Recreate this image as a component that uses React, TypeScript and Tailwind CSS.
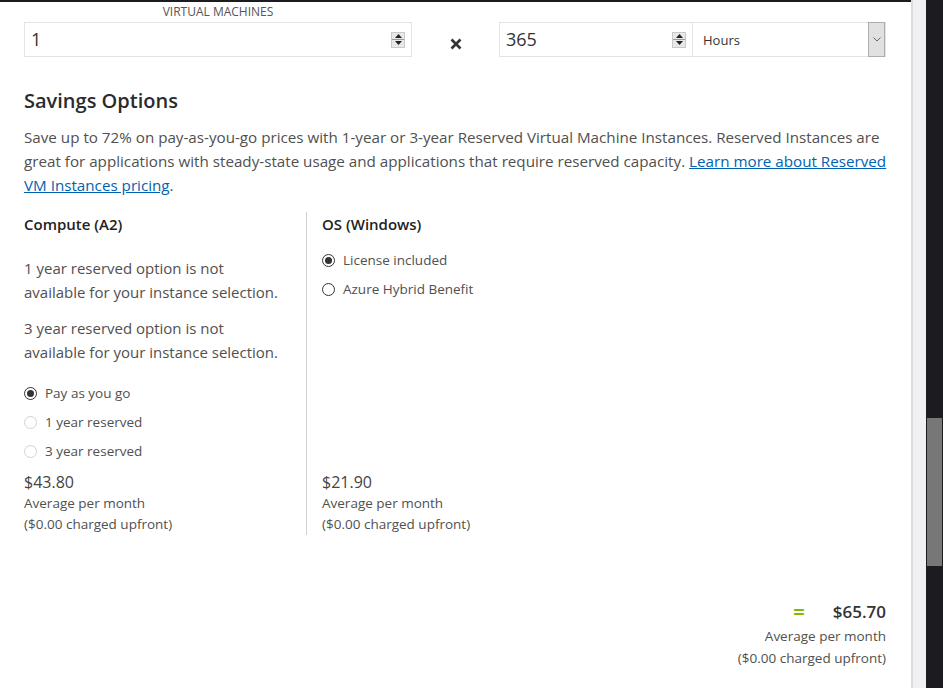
import React from 'react';

const Spinner = () => (
    <div className="flex h-[16px] w-[14px] flex-col border border-[#c9c9c9] bg-[#e8e8e8]">
        <div className="flex flex-1 items-center justify-center border-b border-[#9a9a9a]">
            <svg width="7" height="4" viewBox="0 0 7 4"><path d="M0 4 L3.5 0 L7 4 Z" fill="#222" /></svg>
        </div>
        <div className="flex flex-1 items-center justify-center">
            <svg width="7" height="4" viewBox="0 0 7 4"><path d="M0 0 L3.5 4 L7 0 Z" fill="#222" /></svg>
        </div>
    </div>
);

const Radio = ({ checked, disabled, label }: { checked?: boolean; disabled?: boolean; label: string }) => (
    <div className="flex h-[29px] items-center gap-[8px]">
        <span
            className={`flex h-[13px] w-[13px] items-center justify-center rounded-full border ${disabled ? 'border-[#d2d2d2]' : 'border-[#333]'}`}
        >
            {checked && <span className="h-[7px] w-[7px] rounded-full bg-[#333]" />}
        </span>
        <span className="text-[13.5px] text-[#505050]">{label}</span>
    </div>
);

const Price = ({ amount }: { amount: string }) => (
    <div className="mt-auto pt-[5px]">
        <div className="text-[16px] leading-[22px] text-[#444]">{amount}</div>
        <div className="text-[13.5px] leading-[21px] text-[#505050]">Average per month</div>
        <div className="text-[13.5px] leading-[21px] text-[#505050]">($0.00 charged upfront)</div>
    </div>
);

export default function App() {
    return (
        <div
            className="flex h-[688px] w-[943px] overflow-hidden bg-white"
            style={{ fontFamily: '"Open Sans", "Noto Sans", sans-serif' }}
        >
            <main className="flex w-[911px] flex-col">
                <div className="h-[2px] bg-[#1c1c20]" />
                <div className="px-[24px] pr-[25px]">
                    {/* quantity row */}
                    <div className="flex items-end">
                        <div className="flex w-[388px] flex-col">
                            <div className="text-center text-[12px] uppercase leading-[20px] text-[#555]">Virtual machines</div>
                            <div className="flex h-[35px] items-center justify-between border border-[#e3e3e3] pl-[6px] pr-[6px]">
                                <span className="text-[18px] text-[#333]">1</span>
                                <Spinner />
                            </div>
                        </div>
                        <div className="flex h-[35px] w-[87px] items-center justify-center pt-[8px]">
                            <svg width="12" height="12" viewBox="0 0 12 12">
                                <path d="M1.5 1.5 L10.5 10.5 M10.5 1.5 L1.5 10.5" stroke="#333" strokeWidth="2.6" />
                            </svg>
                        </div>
                        <div className="flex h-[35px] w-[194px] items-center justify-between border border-[#e3e3e3] pl-[6px] pr-[6px]">
                            <span className="text-[18px] text-[#333]">365</span>
                            <Spinner />
                        </div>
                        <div className="flex h-[35px] w-[193px] items-center justify-between border border-l-0 border-[#e3e3e3] pl-[10px]">
                            <span className="pt-[2px] text-[13px] text-[#333]">Hours</span>
                            <div className="flex h-[35px] w-[17px] items-center justify-center border border-[#adadad] bg-[#e1e1e1]">
                                <svg width="8" height="5" viewBox="0 0 8 5"><path d="M0.5 0.5 L4 4 L7.5 0.5" stroke="#666" fill="none" /></svg>
                            </div>
                        </div>
                    </div>

                    <h2 className="mt-[30px] text-[20px] font-semibold leading-[28px] text-[#2b2b2b]">Savings Options</h2>
                    <p className="mt-[10px] whitespace-nowrap text-[15.2px] leading-[24px] text-[#505050]">
                        Save up to 72% on pay-as-you-go prices with 1-year or 3-year Reserved Virtual Machine Instances. Reserved Instances are
                        <br />
                        great for applications with steady-state usage and applications that require reserved capacity.{' '}
                        <a className="text-[#0063b1] underline">Learn more about Reserved</a>
                        <br />
                        <a className="text-[#0063b1] underline">VM Instances pricing</a>.
                    </p>

                    {/* columns */}
                    <div className="mt-[15px] flex">
                        <div className="flex w-[283px] flex-col border-r border-[#d0d0d0]">
                            <h3 className="text-[15px] font-semibold leading-[24px] text-[#222]">Compute (A2)</h3>
                            <p className="mt-[20px] text-[15px] leading-[24px] text-[#505050]">
                                1 year reserved option is not
                                <br />
                                available for your instance selection.
                            </p>
                            <p className="mt-[12px] text-[15px] leading-[24px] text-[#505050]">
                                3 year reserved option is not
                                <br />
                                available for your instance selection.
                            </p>
                            <div className="mt-[15px]">
                                <Radio checked label="Pay as you go" />
                                <Radio disabled label="1 year reserved" />
                                <Radio disabled label="3 year reserved" />
                            </div>
                            <Price amount="$43.80" />
                        </div>
                        <div className="flex flex-col pl-[15px]">
                            <h3 className="text-[15px] font-semibold leading-[24px] text-[#222]">OS (Windows)</h3>
                            <div className="mt-[10px]">
                                <Radio checked label="License included" />
                                <Radio label="Azure Hybrid Benefit" />
                            </div>
                            <Price amount="$21.90" />
                        </div>
                    </div>

                    {/* total */}
                    <div className="mt-[65px] flex flex-col items-end">
                        <div className="flex items-center gap-[28px] leading-[24px]">
                            <span className="text-[20px] font-bold text-[#7fba00]">=</span>
                            <span className="text-[17px] font-semibold text-[#333]">$65.70</span>
                        </div>
                        <div className="text-[13.5px] leading-[24px] text-[#505050]">Average per month</div>
                        <div className="text-[13.5px] leading-[20px] text-[#505050]">($0.00 charged upfront)</div>
                    </div>
                </div>
            </main>
            <div className="w-[15px] border-l-2 border-[#dcdcdc] bg-[#f0f0f2]" />
            <div className="w-[17px] bg-[#1c1c20] px-[1px] pt-[418px]">
                <div className="h-[148px] bg-[#777]" />
            </div>
        </div>
    );
}
